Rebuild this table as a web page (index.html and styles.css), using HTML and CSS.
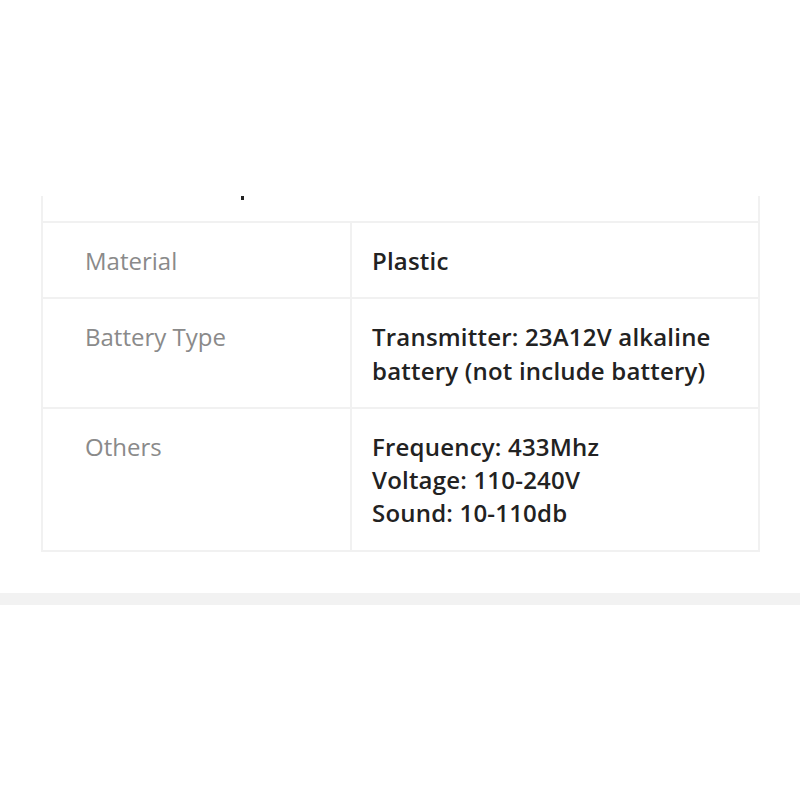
FILE: index.html
```html
<!DOCTYPE html>
<html lang="en">
<head>
<meta charset="utf-8">
<title>Specifications</title>
<link rel="stylesheet" href="styles.css">
</head>
<body>
<div class="page">
  <table class="spec">
    <colgroup>
      <col class="col-label">
      <col class="col-value">
    </colgroup>
    <tr class="head-row">
      <td colspan="2" class="head-cell"><span class="dot"></span></td>
    </tr>
    <tr>
      <td class="label">Material</td>
      <td class="value">Plastic</td>
    </tr>
    <tr>
      <td class="label">Battery Type</td>
      <td class="value">Transmitter: 23A12V alkaline<br>battery (not include battery)</td>
    </tr>
    <tr>
      <td class="label">Others</td>
      <td class="value">Frequency: 433Mhz<br>Voltage: 110-240V<br>Sound: 10-110db</td>
    </tr>
  </table>
</div>
<div class="band"></div>
</body>
</html>
```

FILE: styles.css
```css
html, body {
  margin: 0;
  padding: 0;
  background: #ffffff;
}
body {
  font-family: "Open Sans", "Noto Sans", sans-serif;
}
.page {
  padding: 196px 41px 0 41px;
}
.spec {
  width: 717px;
  border-collapse: collapse;
  table-layout: fixed;
}
.col-label {
  width: 309px;
}
.col-value {
  width: 408px;
}
.spec td {
  border: 2px solid #f1f1f1;
  vertical-align: top;
  font-size: 24px;
  line-height: 33.3px;
  padding: 21px 20px 20px 20px;
}
.spec tr.head-row td {
  border-top: none;
  height: 25px;
  padding: 0;
  line-height: 0;
}
.dot {
  display: block;
  width: 3px;
  height: 4px;
  background: #222;
  margin-left: 198px;
}
.spec td.label {
  padding-left: 42px;
  color: #8a8a8a;
  font-weight: 400;
}
.spec td.value {
  color: #222222;
  font-weight: 600;
  letter-spacing: 0.2px;
}
.band {
  margin-top: 41px;
  height: 12px;
  background: #f2f2f2;
}
```
